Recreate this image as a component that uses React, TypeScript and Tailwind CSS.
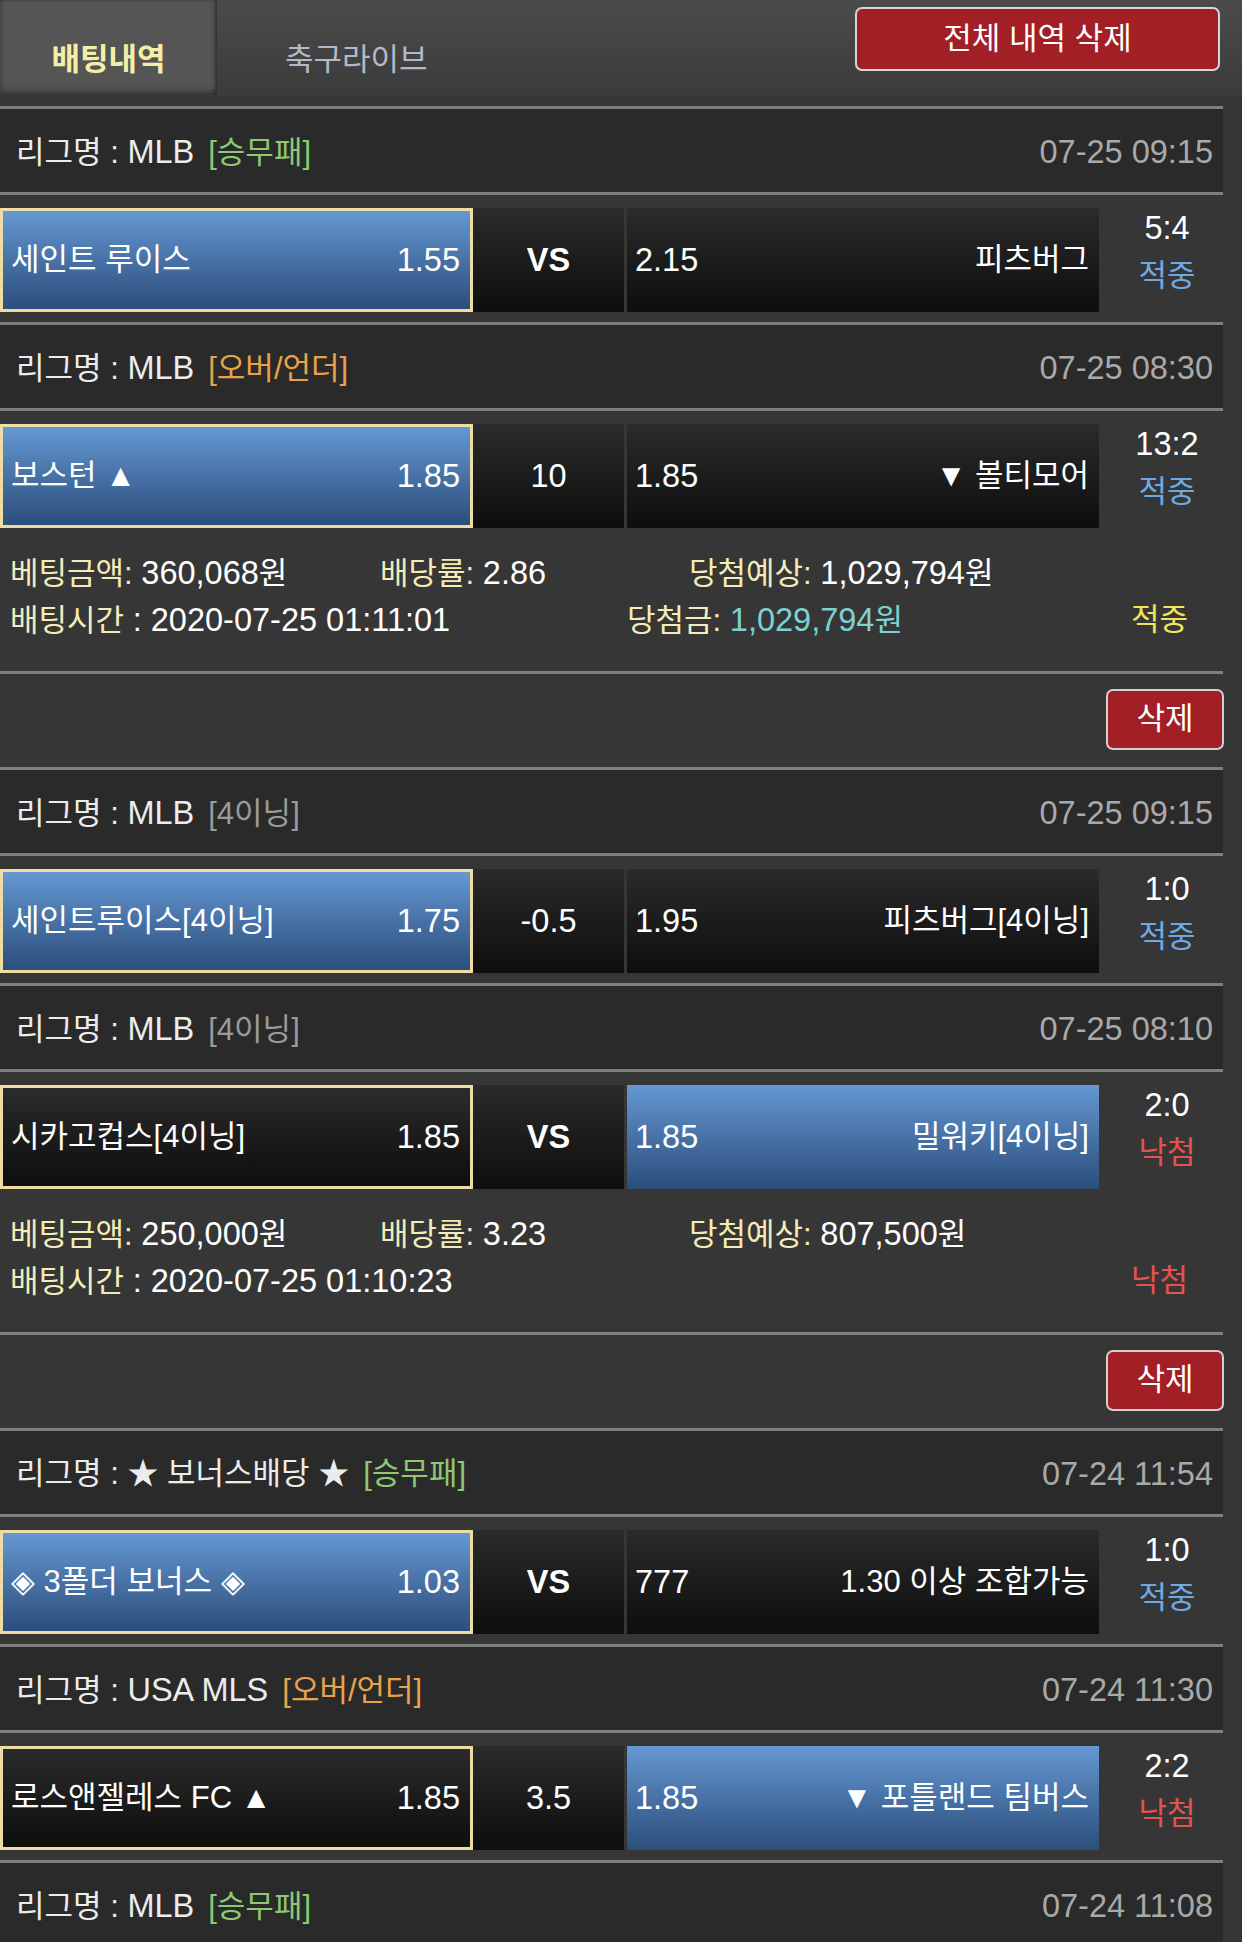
const font = "font-['Liberation_Sans','Noto_Sans_CJK_KR',sans-serif]";
const num = 'text-[32.5px]';

type Tag = { text: string; color: string };

type Match = {
  league: string;
  tag: Tag;
  time: string;
  home: string;
  homeOdds: string;
  mid: string;
  midBold?: boolean;
  awayOdds: string;
  away: string;
  pick: 'home' | 'away';
  score: string;
  result: '적중' | '낙첨';
};

type Slip = {
  matches: Match[];
  amount?: string;
  rate?: string;
  expect?: string;
  time?: string;
  won?: string;
  status?: '적중' | '낙첨';
};

const green = { text: '[승무패]', color: 'text-[#8dc873]' };
const orange = { text: '[오버/언더]', color: 'text-[#e9a24c]' };
const gray = { text: '[4이닝]', color: 'text-[#9a9a9a]' };

const slips: Slip[] = [
  {
    matches: [
      {
        league: 'MLB', tag: green, time: '07-25 09:15',
        home: '세인트 루이스', homeOdds: '1.55', mid: 'VS', midBold: true,
        awayOdds: '2.15', away: '피츠버그', pick: 'home', score: '5:4', result: '적중',
      },
      {
        league: 'MLB', tag: orange, time: '07-25 08:30',
        home: '보스턴 ▲', homeOdds: '1.85', mid: '10',
        awayOdds: '1.85', away: '▼ 볼티모어', pick: 'home', score: '13:2', result: '적중',
      },
    ],
    amount: '360,068', rate: '2.86', expect: '1,029,794',
    time: '2020-07-25 01:11:01', won: '1,029,794', status: '적중',
  },
  {
    matches: [
      {
        league: 'MLB', tag: gray, time: '07-25 09:15',
        home: '세인트루이스[4이닝]', homeOdds: '1.75', mid: '-0.5',
        awayOdds: '1.95', away: '피츠버그[4이닝]', pick: 'home', score: '1:0', result: '적중',
      },
      {
        league: 'MLB', tag: gray, time: '07-25 08:10',
        home: '시카고컵스[4이닝]', homeOdds: '1.85', mid: 'VS', midBold: true,
        awayOdds: '1.85', away: '밀워키[4이닝]', pick: 'away', score: '2:0', result: '낙첨',
      },
    ],
    amount: '250,000', rate: '3.23', expect: '807,500',
    time: '2020-07-25 01:10:23', status: '낙첨',
  },
  {
    matches: [
      {
        league: '★ 보너스배당 ★', tag: green, time: '07-24 11:54',
        home: '◈ 3폴더 보너스 ◈', homeOdds: '1.03', mid: 'VS', midBold: true,
        awayOdds: '777', away: '1.30 이상 조합가능', pick: 'home', score: '1:0', result: '적중',
      },
      {
        league: 'USA MLS', tag: orange, time: '07-24 11:30',
        home: '로스앤젤레스 FC ▲', homeOdds: '1.85', mid: '3.5',
        awayOdds: '1.85', away: '▼ 포틀랜드 팀버스', pick: 'away', score: '2:2', result: '낙첨',
      },
    ],
  },
];

const blue = 'bg-linear-to-b from-[#6598d3] to-[#2c4e7c]';
const dark = 'bg-linear-to-b from-[#2b2b2b] to-[#0e0e0e]';

function Line() {
  return <div className="h-[3px] w-[1223px] bg-[#7f7f7f]" />;
}

function LeagueRow({ league, tag, time }: { league: string; tag: Tag; time: string }) {
  const latin = /^[A-Z ]+$/.test(league);
  return (
    <div className="flex h-[83px] w-[1223px] items-center justify-between bg-[#2a2a2a] pl-[16px] pr-[10px] pt-[4px] text-[31px]">
      <div className="text-[#ececec]">
        리그명 : <span className={latin ? num : ''}>{league}</span>
        <span className={`ml-[14px] ${tag.color}`}>{tag.text}</span>
      </div>
      <div className={`text-[#a9a9a9] ${num}`}>{time}</div>
    </div>
  );
}

function MatchRow({ m }: { m: Match }) {
  return (
    <div className="flex w-[1223px] pt-[13px] pb-[10px] text-[31px] text-white">
      <div
        className={`flex h-[104px] w-[473px] items-center justify-between border-[3px] border-[#efdca3] pl-[8px] pr-[10px] ${
          m.pick === 'home' ? blue : dark
        }`}
      >
        <span>{m.home}</span>
        <span className={num}>{m.homeOdds}</span>
      </div>
      <div
        className={`flex h-[104px] w-[151px] items-center justify-center ${dark} ${num} ${
          m.midBold ? 'font-bold' : ''
        }`}
      >
        {m.mid}
      </div>
      <div
        className={`ml-[3px] flex h-[104px] w-[472px] items-center justify-between pl-[8px] pr-[10px] ${
          m.pick === 'away' ? blue : dark
        }`}
      >
        <span className={num}>{m.awayOdds}</span>
        <span>{m.away}</span>
      </div>
      <div className="flex h-[104px] flex-1 flex-col items-center justify-start gap-[8px] pl-[12px] leading-[40px]">
        <span className={num}>{m.score}</span>
        <span className={m.result === '적중' ? 'text-[#70a9e2]' : 'text-[#e2534f]'}>{m.result}</span>
      </div>
    </div>
  );
}

function Info({ s }: { s: Slip }) {
  const label = 'text-[#f3ecb9]';
  return (
    <div className="flex h-[133px] w-[1223px] flex-col gap-[10px] pl-[10px] pt-[17px] text-[31px] leading-[36px] text-white">
      <div className="flex">
        <span className="w-[370px]">
          <span className={label}>베팅금액:</span> <span className={num}>{s.amount}</span>원
        </span>
        <span className="w-[309px]">
          <span className={label}>배당률:</span> <span className={num}>{s.rate}</span>
        </span>
        <span>
          <span className={label}>당첨예상:</span> <span className={num}>{s.expect}</span>원
        </span>
      </div>
      <div className="flex">
        <span className="w-[617px]">
          <span className={label}>배팅시간</span> <span className={num}>: {s.time}</span>
        </span>
        <span className="w-[504px]">
          {s.won && (
            <>
              <span className={label}>당첨금:</span>{' '}
              <span className="text-[#7fd0d2]">
                <span className={num}>{s.won}</span>원
              </span>
            </>
          )}
        </span>
        <span className={s.status === '적중' ? 'text-[#f2e35c]' : 'text-[#e2534f]'}>{s.status}</span>
      </div>
    </div>
  );
}

function DeleteRow() {
  return (
    <div className="flex h-[93px] w-[1224px] items-start justify-end pt-[15px]">
      <button className="h-[61px] w-[118px] rounded-[7px] border-2 border-[#d0d0d0] bg-[#a11f25] text-[31px] text-white">
        삭제
      </button>
    </div>
  );
}

export default function App() {
  return (
    <div className={`h-[1942px] w-[1242px] overflow-hidden bg-[#363636] ${font}`}>
      <div className="flex h-[96px] items-start bg-linear-to-b from-[#4b4b4b] to-[#3b3b3b]">
        <div className="flex h-[95px] w-[217px] items-start justify-center bg-[#555555] pt-[42px] text-[31px] font-bold leading-[36px] text-[#f4efa7] shadow-[inset_0_-4px_6px_rgba(0,0,0,0.35),inset_-2px_0_3px_rgba(0,0,0,0.3)]">
          배팅내역
        </div>
        <div className="ml-[68px] pt-[42px] text-[31px] leading-[36px] text-[#b5b9c7]">축구라이브</div>
        <button className="ml-auto mr-[22px] mt-[7px] h-[64px] w-[365px] rounded-[7px] border-2 border-[#d6d6d6] bg-[#a11f25] text-[31px] text-white">
          전체 내역 삭제
        </button>
      </div>
      <div className="h-[10px]" />
      {slips.map((s, i) => (
        <div key={i}>
          {s.matches.map((m, j) => (
            <div key={j}>
              <Line />
              <LeagueRow league={m.league} tag={m.tag} time={m.time} />
              <Line />
              <MatchRow m={m} />
            </div>
          ))}
          {s.amount && (
            <>
              <Info s={s} />
              <Line />
              <DeleteRow />
            </>
          )}
        </div>
      ))}
      <Line />
      <LeagueRow league="MLB" tag={green} time="07-24 11:08" />
    </div>
  );
}
